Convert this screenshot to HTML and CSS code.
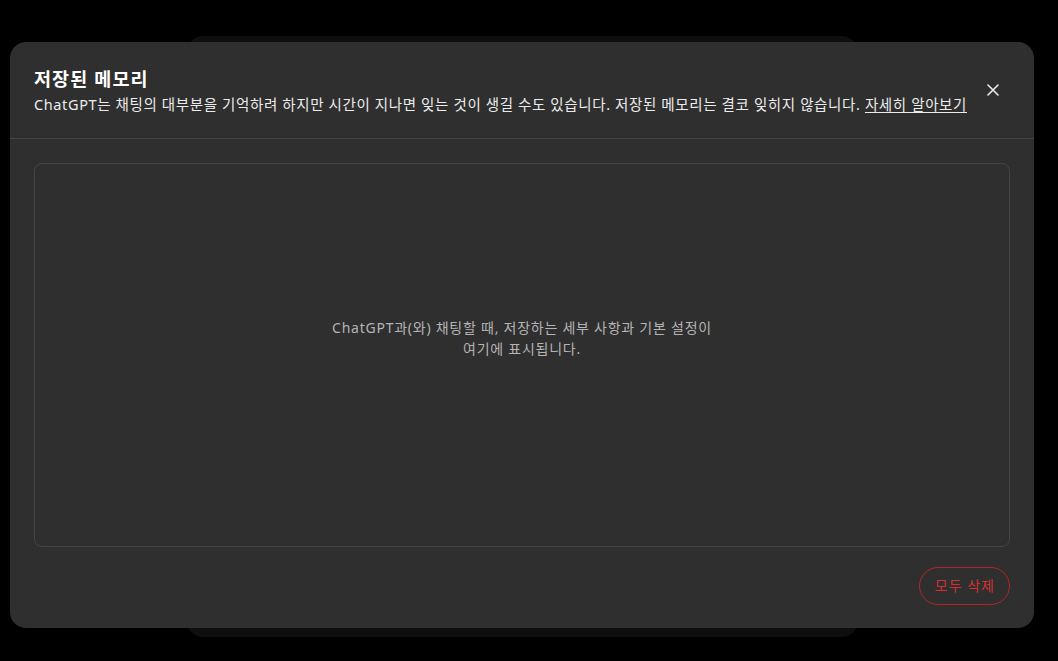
FILE: index.html
```html
<!DOCTYPE html>
<html lang="ko">
<head>
<meta charset="utf-8">
<title>저장된 메모리</title>
<link rel="stylesheet" href="styles.css">
</head>
<body>
<div class="stage">
  <div class="behind"></div>
  <div class="modal" role="dialog">
    <div class="modal-header">
      <div class="header-text">
        <h2 class="title">저장된 메모리</h2>
        <p class="subtitle">ChatGPT는 채팅의 대부분을 기억하려 하지만 시간이 지나면 잊는 것이 생길 수도 있습니다. 저장된 메모리는 결코 잊히지 않습니다. <a class="link" href="#">자세히 알아보기</a></p>
      </div>
      <button class="close" aria-label="닫기">
        <svg width="12" height="12" viewBox="0 0 12 12" aria-hidden="true"><path d="M1 1L11 11M11 1L1 11" stroke="#ececec" stroke-width="1.6" stroke-linecap="round"/></svg>
      </button>
    </div>
    <div class="modal-body">
      <div class="memory-box">
        <p class="empty">ChatGPT과(와) 채팅할 때, 저장하는 세부 사항과 기본 설정이 여기에 표시됩니다.</p>
      </div>
      <div class="actions">
        <button class="danger">모두 삭제</button>
      </div>
    </div>
  </div>
</div>
</body>
</html>
```

FILE: styles.css
```css
* { box-sizing: border-box; }
html, body {
  margin: 0;
  padding: 0;
  background: #000;
  width: 1058px;
  height: 661px;
  overflow: hidden;
  font-family: "Noto Sans", "Noto Sans CJK KR", sans-serif;
  color: #ececec;
}
.stage {
  position: relative;
  width: 1058px;
  height: 661px;
  padding-top: 36px;
  padding-left: 187px;
}
.behind {
  width: 671px;
  height: 601px;
  background: #0e0e0e;
  border-radius: 16px;
}
.modal {
  position: absolute;
  left: 10px;
  top: 42px;
  width: 1024px;
  height: 586px;
  background: #2f2f2f;
  border-radius: 16px;
  display: flex;
  flex-direction: column;
}
.modal-header {
  display: flex;
  align-items: center;
  justify-content: space-between;
  padding: 24px 24px;
  border-bottom: 1px solid #444;
}
.title {
  margin: 0;
  font-size: 18.5px;
  line-height: 26px;
  letter-spacing: 1.1px;
  font-weight: 700;
  color: #fff;
  padding-bottom: 2px;
}
.subtitle {
  margin: 0;
  font-size: 14.5px;
  line-height: 20px;
  letter-spacing: 0.62px;
  color: #ececec;
}
.link {
  color: #ececec;
  text-decoration: underline;
  text-underline-offset: 2px;
}
.close {
  background: none;
  border: 0;
  padding: 0;
  margin-right: 11px;
  width: 12px;
  height: 12px;
  display: flex;
  cursor: pointer;
}
.modal-body {
  flex: 1;
  display: flex;
  flex-direction: column;
  padding: 24px 24px 23px;
  gap: 20px;
}
.memory-box {
  flex: 1;
  border: 1px solid #454545;
  border-radius: 8px;
  display: flex;
  align-items: center;
  justify-content: center;
  padding-bottom: 34px;
}
.empty {
  margin: 0;
  max-width: 410px;
  text-align: center;
  font-size: 14px;
  line-height: 21px;
  letter-spacing: 0.75px;
  word-break: keep-all;
  color: #b4b4b4;
}
.actions {
  display: flex;
  justify-content: flex-end;
}
.danger {
  font-family: inherit;
  font-size: 14px;
  line-height: 20px;
  letter-spacing: 1px;
  padding: 8px 14px 8px 15px;
  border-radius: 999px;
  border: 1px solid #b42525;
  background: transparent;
  color: #d33131;
  cursor: pointer;
}
```
